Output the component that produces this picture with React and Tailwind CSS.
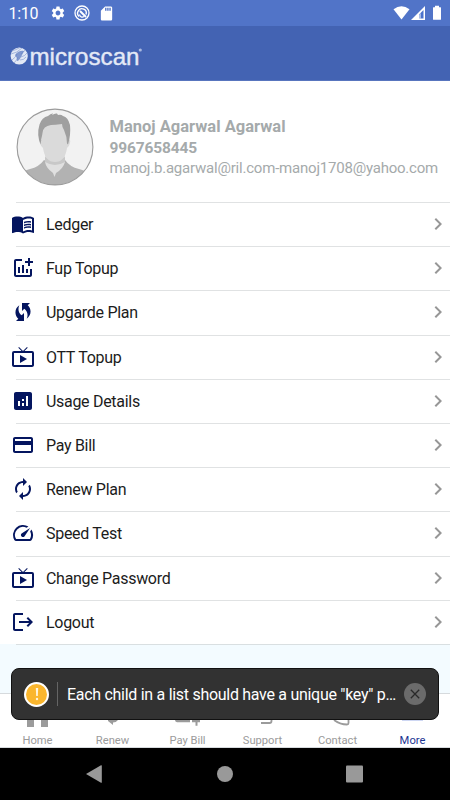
// src/screens/MoreScreen.jsx
import React from 'react';
import {
  MdMenuBook, MdAddchart, MdWifiProtectedSetup, MdLiveTv, MdAnalytics, MdPayment, MdAutorenew,
  MdSpeed, MdLogout, MdChevronRight, MdSettings, MdSdCard,
} from 'react-icons/md';

const MENU = [
  { label: 'Ledger', icon: MdMenuBook },
  { label: 'Fup Topup', icon: MdAddchart },
  { label: 'Upgarde Plan', icon: MdWifiProtectedSetup },
  { label: 'OTT Topup', icon: MdLiveTv },
  { label: 'Usage Details', icon: MdAnalytics },
  { label: 'Pay Bill', icon: MdPayment },
  { label: 'Renew Plan', icon: MdAutorenew },
  { label: 'Speed Test', icon: MdSpeed },
  { label: 'Change Password', icon: MdLiveTv },
  { label: 'Logout', icon: MdLogout },
];

// only the lower part of each tab icon shows under the warning toast
const TABS = [
  { label: 'Home', art: <path d="M2 0h7v7H2zM16 0h7v7h-7z" fill="currentColor" /> },
  { label: 'Renew', art: <path d="M8 1l5 4V2.600q3 0 5-2.600H8z" fill="currentColor" /> },
  { label: 'Pay Bill', art: <path d="M0 0h15v2.200H2Q0 2 0 0zM17 0h8v2.200h-2.500v3.500h-2V2.200H17z" fill="currentColor" /> },
  { label: 'Support', art: <path d="M11 3h8.500q2 0 2-2V0" fill="none" stroke="currentColor" strokeWidth="1.800" /> },
  { label: 'Contact', art: <path d="M9 0q6 4.500 13 4.500 1.500 0 1.500-1.500V0" fill="none" stroke="currentColor" strokeWidth="1.800" /> },
  { label: 'More', art: <path d="M2 0h21v.700H2z" fill="#b9c6ee" />, active: true },
];

function StatusBar() {
  return (
    <div className="flex h-[26px] flex-none items-center bg-[#5174c8] pl-[8.500px] pr-[8px] text-white">
      <span className="w-[41.500px] pt-[2px] text-[16px] leading-[24px] tracking-[-0.3px]">1:10</span>
      <MdSettings size={16} />
      <svg width="16" height="16" viewBox="0 0 16 16" className="ml-[8px]" fill="none" stroke="currentColor">
        <circle cx="8" cy="8" r="7" strokeWidth="1.300" />
        <path d="M5.200 11.400A4.300 4.300 0 1 1 12 9.500" strokeWidth="1.400" />
        <path d="M6 6l6 6" strokeWidth="1.900" />
        <path d="M5.500 9.500a2.800 2.800 0 0 0 4.500 2" strokeWidth="1.200" />
      </svg>
      <MdSdCard size={17} className="ml-[8px]" />
      <svg width="50" height="16" viewBox="0 0 50 16" className="ml-auto" fill="currentColor">
        <path d="M1.500 4.200Q9.500 -1.800 17.500 4.200L9.500 14.500z" />
        <path d="M33 1v14H19z" />
        <path d="M31.500 5v8.500h-4.200V9.300z" fill="#4a72cc" />
        <path d="M29 8v5.500h-1.700V9.700z" fill="#fff" opacity="0.500" />
        <path d="M43 .8h4v1.500h1.500q.5 0 .5.500v11.500q0 .5-.5.500h-7q-.5 0-.5-.5V2.800q0-.5.500-.5H43z" />
      </svg>
    </div>
  );
}

function Header() {
  return (
    <div className="h-[55px] flex-none border-b border-[#5875be] bg-[#4363b3] pl-[10px] pt-[10px]">
      <svg width="140" height="40" viewBox="0 0 140 40">
        <circle cx="9.200" cy="20" r="8.600" fill="#e3e9f5" />
        <path d="M1.500 15Q6 14 10 11.500M1 18q6-1 11-6M2 24q4-3 5-6M4 27q3-3 4-6M11 18q3-2 4-4M11 21q4-1 6-4M10 24q4 0 6-3" fill="none" stroke="#8da1d2" strokeWidth="0.700" />
        <path d="M5 19q4-5 9-4l-3 6q-2 4-4 4 0-4-2-6z" fill="#5f7cc1" opacity="0.750" />
        <text x="19.500" y="28.500" textLength="110" lengthAdjust="spacingAndGlyphs" fill="#e3e9f6" stroke="#e3e9f6" strokeWidth="0.400" fontSize="24" fontFamily="Liberation Sans, Arial, sans-serif">microscan</text>
        <circle cx="130.300" cy="14" r="1.600" fill="#a9b9e0" />
      </svg>
    </div>
  );
}

function Avatar() {
  return (
    <svg width="78" height="78" viewBox="0 0 78 78">
      <defs><clipPath id="avatarClip"><circle cx="39" cy="39" r="38" /></clipPath></defs>
      <circle cx="39" cy="39" r="38" fill="#f2f2f2" />
      <g clipPath="url(#avatarClip)">
        <path d="M5 66q2-3 9-5 9-2 14-9l10 5 11-5q5 7 14 9 7 2 10 5v14H5z" fill="#b2b2b2" />
        <path d="M29 47h20v7q-2 7-9 11l-1.500 4-1.500-4q-7-5-8-11z" fill="#e0e0e0" />
        <path d="M29 49q10 4 20 0v5q-10 6-20 0z" fill="#c8c8c8" />
        <path d="M26 23q3-9 13-9t13 9v9q3-1 2 3-1 4-3 5-2 14-12 14T27 40q-2-1-3-5-1-4 2-3z" fill="#dadada" />
        <path d="M24.500 36.500q-4-10-1-20Q26 9 32 8q3-3 5-2.500L36 7q3-2 5-1.500l1 1.500q3-1 5 1 5 1 7 9 1 10-2 19.500l-1-1q0-7-3-13.500-2-3-2-6-7 1-11 1-8 1-8.500 8z" fill="#9f9f9f" />
      </g>
      <circle cx="39" cy="39" r="37.900" fill="none" stroke="#9b9b9b" strokeWidth="1.100" />
    </svg>
  );
}

function Toast() {
  return (
    <div className="absolute left-[11px] top-[668px] flex h-[52px] w-[428px] items-center rounded-[8px] border border-[#111] bg-[#323232] px-[12px]">
      <div className="flex size-[25px] flex-none items-center justify-center rounded-full border-2 border-white bg-[#fab62e]">
        <svg width="4" height="14" viewBox="0 0 4 14" fill="#fff4dc">
          <path d="M.8 1h2.400L2.800 9H1.200z" />
          <circle cx="2" cy="12" r="1.200" />
        </svg>
      </div>
      <div className="ml-[8px] h-[24px] w-px bg-[#656565]" />
      <p className="ml-[9px] flex-1 whitespace-nowrap pt-[2px] text-[16px] tracking-[-0.29px] text-white">Each child in a list should have a unique "key" p…</p>
      <div className="flex size-[22px] flex-none items-center justify-center rounded-full bg-[#6b6b6b]">
        <svg width="10" height="10" viewBox="0 0 10 10" stroke="#292929" strokeWidth="1.300"><path d="M.8.8l8.400 8.400M9.200.8L.8 9.200" /></svg>
      </div>
    </div>
  );
}

export default function App() {
  return (
    <div className="relative flex h-[800px] w-[450px] flex-col overflow-hidden bg-[#f3fbff] font-[Roboto,sans-serif]">
      <StatusBar />
      <Header />

      {/* Profile */}
      <div className="flex h-[121px] flex-none bg-white pl-[15.500px] pt-[26.500px]">
        <Avatar />
        <div className="ml-[16px] pt-[8.500px] text-[#a5aaab]">
          <p className="text-[16.500px] font-bold leading-[22px]">Manoj Agarwal Agarwal</p>
          <p className="text-[15.500px] font-bold leading-[21px] tracking-[-0.15px]">9967658445</p>
          <p className="whitespace-nowrap text-[15px] leading-[19px] tracking-[-0.21px]">manoj.b.agarwal@ril.com-manoj1708@yahoo.com</p>
        </div>
      </div>

      {/* Menu */}
      <div className="flex-none bg-white">
        {MENU.map(({ label, icon: Icon }) => (
          <div key={label} className="relative flex h-[44.200px] items-center pl-[11px]">
            <div className="absolute left-[16px] right-0 top-0 h-px bg-[#e0e2e3]" />
            <Icon size={24} className="text-[#04155f]" />
            <span className="ml-[11px] flex-1 pt-[2px] text-[16px] tracking-[-0.3px] text-[#1c1c1c]">{label}</span>
            <MdChevronRight size={24} className="text-[#979797]" />
          </div>
        ))}
      </div>
      <div className="ml-[16px] h-px flex-none bg-[#d9dfe1]" />

      {/* Bottom tabs */}
      <div className="mt-auto flex h-[55px] flex-none border-b border-t border-[#d6dadd] bg-white pt-[26px]">
        {TABS.map((tab) => (
          <div key={tab.label} className={`flex flex-1 flex-col items-center ${tab.active ? 'text-[#1c3592]' : 'text-[#9b9b9b]'}`}>
            <svg width="25" height="8" viewBox="0 0 25 8" className="flex-none">{tab.art}</svg>
            <span className="mt-[5px] text-[11.200px] leading-[15px]">{tab.label}</span>
          </div>
        ))}
      </div>

      {/* Android navigation */}
      <div className="flex h-[52px] flex-none items-center bg-black">
        <svg width="450" height="20" viewBox="0 0 450 20" fill="#999">
          <path d="M86 10l15-8.700q.8-.4.8.5v16.400q0 .9-.8.5z" />
          <circle cx="225" cy="10" r="8" />
          <rect x="346" y="1.500" width="17" height="17" rx="1" />
        </svg>
      </div>

      <Toast />
    </div>
  );
}
